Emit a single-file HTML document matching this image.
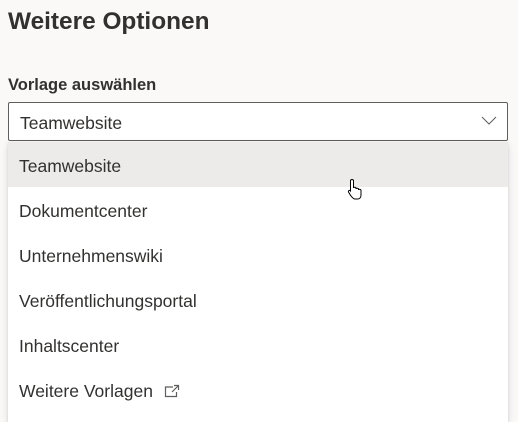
<!DOCTYPE html>
<html><head><style>
body{margin:0;width:518px;height:410px;background:#faf9f8;font-family:"Liberation Sans",sans-serif;color:#323130;overflow:hidden;position:relative}
.t{position:absolute;left:8px;top:8px;font-size:24.4px;font-weight:bold;color:#323130}
.l{position:absolute;left:8px;top:76px;font-size:16.5px;font-weight:bold}
.box{position:absolute;left:8px;top:102px;width:498px;height:37px;border:1px solid #605e5c;border-radius:2px;background:#fff}
.box span{position:absolute;left:11px;top:10px;font-size:17.5px}
.box svg{position:absolute;right:10px;top:13px}
.menu{position:absolute;left:8px;top:142px;width:500px;height:280px;background:#fff;box-shadow:0 3px 8px rgba(0,0,0,.13),0 1px 2px rgba(0,0,0,.1)}
.r{height:45px;line-height:48px;padding-left:11px;font-size:17.5px}
.r.h{background:#edebe9}
</style></head><body>
<div class="t">Weitere Optionen</div>
<div class="l">Vorlage auswählen</div>
<div class="box"><span>Teamwebsite</span><svg width="16" height="10" viewBox="0 0 16 10"><path d="M1 1l7 7 7-7" fill="none" stroke="#605e5c" stroke-width="1"/></svg></div>
<div class="menu">
<div class="r h">Teamwebsite</div>
<div class="r">Dokumentcenter</div>
<div class="r">Unternehmenswiki</div>
<div class="r">Veröffentlichungsportal</div>
<div class="r">Inhaltscenter</div>
<div class="r">Weitere Vorlagen <svg width="16" height="14" viewBox="0 0 16 14" style="vertical-align:-1px;margin-left:6px"><path d="M9 3H1.5v9.5h11V8M10 1.5h4.5V6M14.5 1.5L8 8" fill="none" stroke="#605e5c" stroke-width="1.2"/></svg></div>
</div>
<svg style="position:absolute;left:347px;top:178px" width="18" height="22" viewBox="0 0 18 22"><path d="M5 1.5c1 0 1.5.5 1.5 1.5v7c0-1 2.5-1 2.5 0v1c0-1 2.5-1 2.5 0v1c0-1 2.5-1 2.5.5v4.5c0 2-1 4-3 4H8c-2 0-3-2-4-3L1.5 14c-.5-1 .5-2 1.5-1.5L3.5 13V3c0-1 .5-1.5 1.5-1.5z" fill="#fff" stroke="#000" stroke-width="1"/></svg>
</body></html>
